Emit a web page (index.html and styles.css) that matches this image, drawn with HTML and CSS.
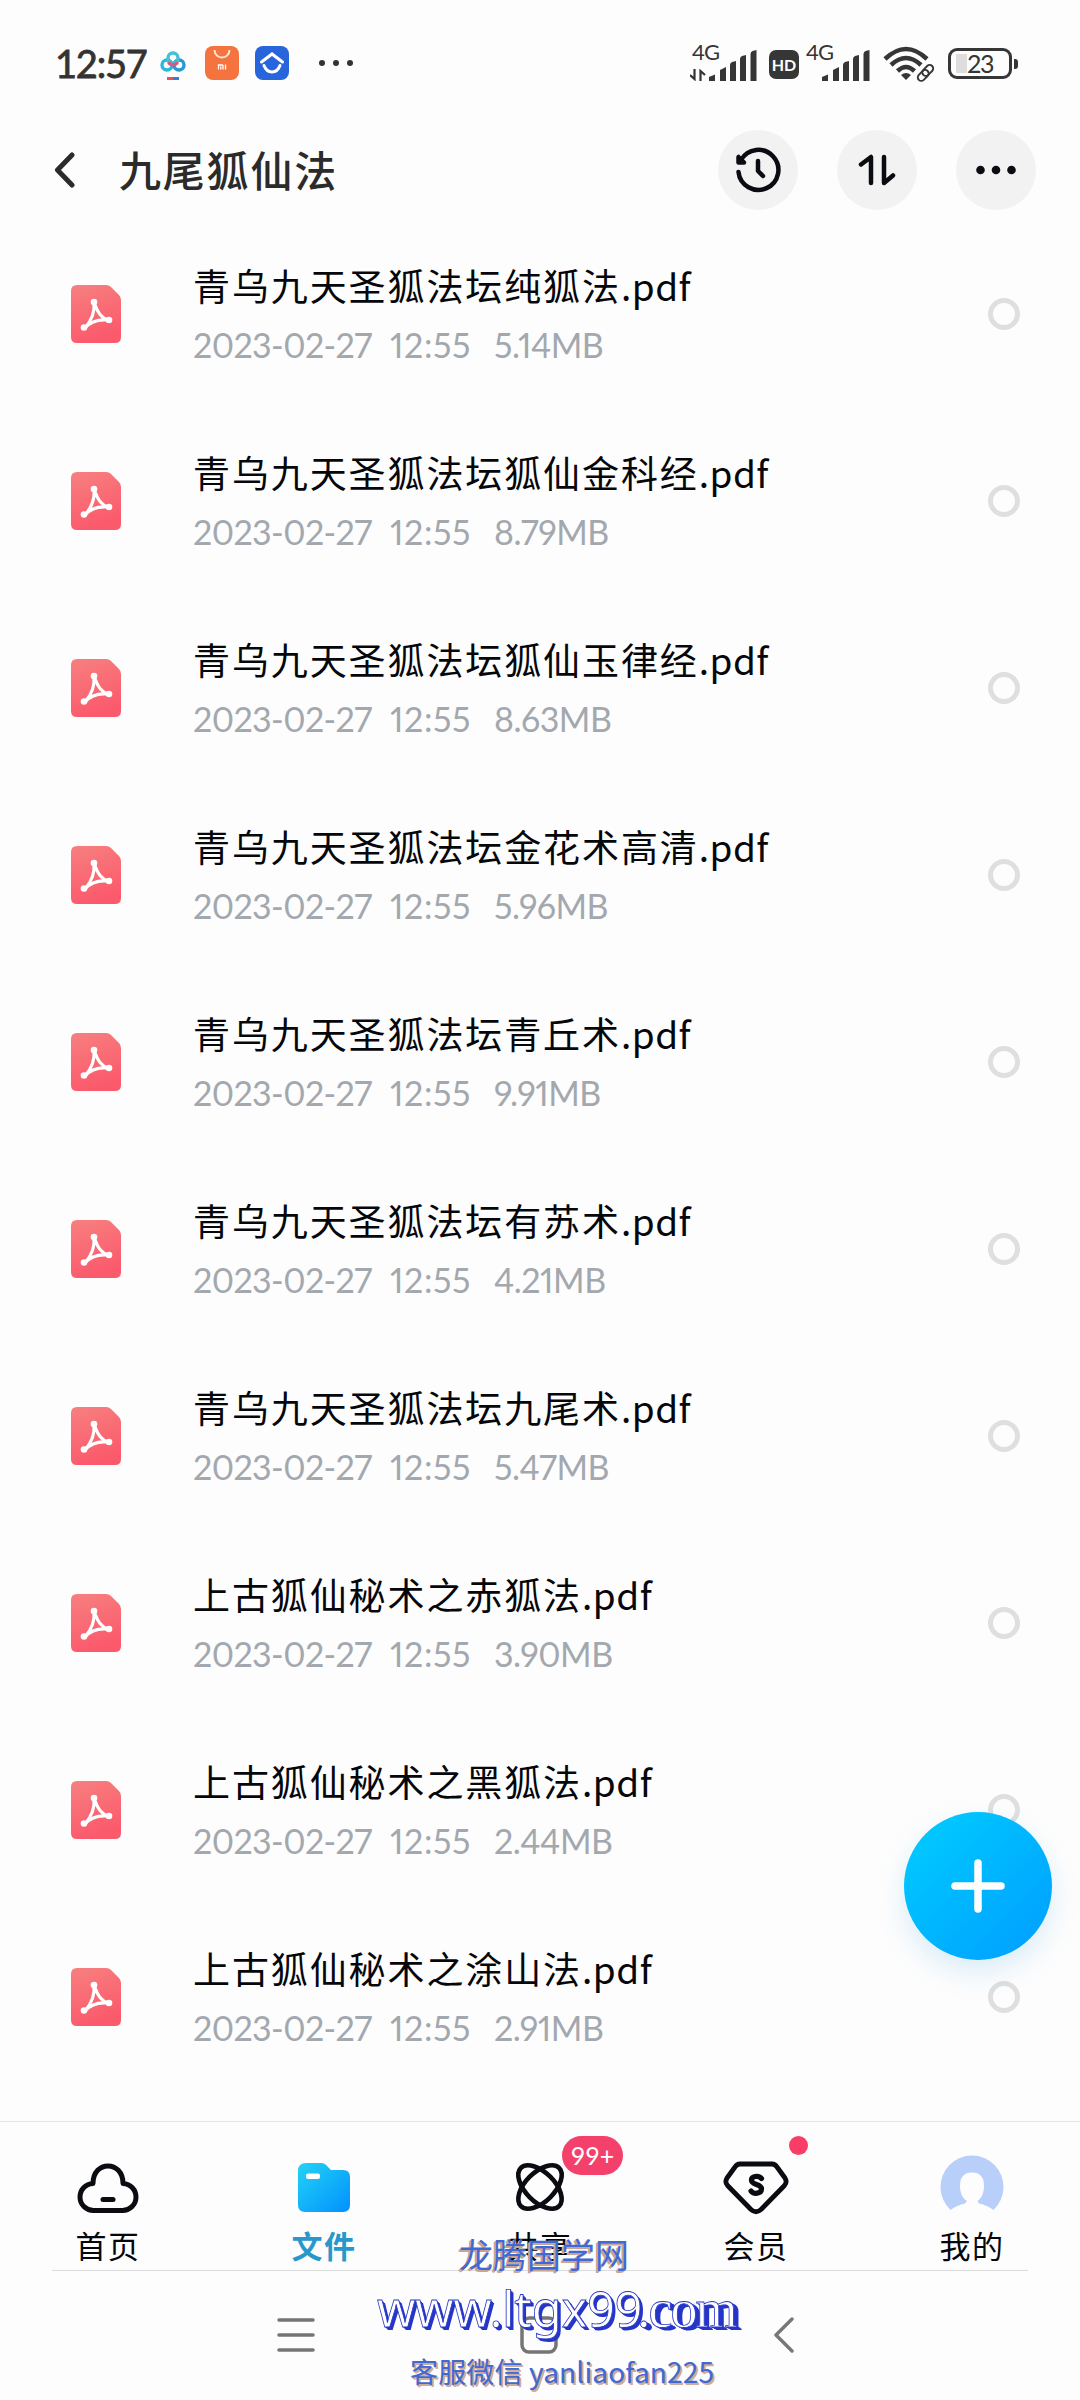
FILE: index.html
```html
<!DOCTYPE html>
<html lang="zh-CN">
<head>
<meta charset="utf-8">
<title>九尾狐仙法</title>
<link rel="stylesheet" href="styles.css">
</head>
<body>
<svg class="defs" width="0" height="0">
  <defs>
    <linearGradient id="pdf-g" x1="0" y1="0" x2="0.3" y2="1"><stop offset="0" stop-color="#f7807f"/><stop offset="1" stop-color="#fb5a6c"/></linearGradient>
    <linearGradient id="folder-g" x1="0" y1="0" x2="1" y2="1"><stop offset="0" stop-color="#23d3f4"/><stop offset="1" stop-color="#0290ff"/></linearGradient>
    <symbol id="pdf" viewBox="0 0 50 58">
      <path fill="url(#pdf-g)" d="M6 0H35Q38 0 40 2L48 10Q50 12 50 15V52Q50 58 44 58H6Q0 58 0 52V6Q0 0 6 0Z"/>
      <path fill="none" stroke="#fff" stroke-width="3.2" stroke-linejoin="round" d="M23 17C27 29 31 33 37 35C27 34 19 37 14 43C21 35 24 27 23 17Z"/>
      <g fill="#fff"><circle cx="23" cy="17" r="3.3"/><circle cx="38" cy="35" r="3.3"/><circle cx="13" cy="42.500" r="3.3"/></g>
    </symbol>
    <symbol id="signal" viewBox="0 0 48 31">
      <g fill="#363636"><path d="M0 31V27L6 24.500V31Z"/><path d="M11 31V20L17 17V31Z"/><path d="M21 31V15Q21 13 23 12L27 11V31Z"/><path d="M31 31V9Q31 7 33 6L37 5V31Z"/><path d="M41.500 31V4Q41.500 2 43.500 1L47.500 0V31Z"/></g>
    </symbol>
  </defs>
</svg>
<div class="screen">
  <header class="status">
    <div class="status-left">
      <span class="clock">12:57</span>
      <svg class="ic-cloud" width="26" height="30" viewBox="0 0 26 30" fill="none" stroke-width="3.4"><circle cx="7" cy="14" r="5" stroke="#2cb8dc"/><circle cx="19" cy="14" r="5" stroke="#2799d4"/><circle cx="13" cy="7" r="5" stroke="#45c0d6"/><path d="M8.500 11A5 5 0 0 0 17.500 11" stroke="#d95a7e"/><path d="M7 27.500H13" stroke="#e0545e" stroke-width="3"/><path d="M13 27.500H19" stroke="#3d77d8" stroke-width="3"/></svg>
      <svg class="ic-mi" width="34" height="34" viewBox="0 0 34 34"><rect width="34" height="34" rx="8" fill="#f4733f"/><path d="M9.500 4C10 14 24 14 24.500 4" fill="none" stroke="#ffe8d8" stroke-width="2"/><path d="M13.500 23.500V19H17.500Q18 19 18 20V23.500M15.800 20.500V23.500M20.500 18.500V23.500" fill="none" stroke="#fff" stroke-width="1.300"/></svg>
      <svg class="ic-home" width="34" height="34" viewBox="0 0 34 34"><rect width="34" height="34" rx="8" fill="#2864dc"/><path d="M6.500 16L17 8L27.500 16M9 19.500C12 28 22 28 25 19.500" fill="none" stroke="#fff" stroke-width="3" stroke-linecap="round"/></svg>
      <svg class="ic-more" width="36" height="8" viewBox="0 0 36 8" fill="#333"><circle cx="4" cy="4" r="3"/><circle cx="18" cy="4" r="3"/><circle cx="32" cy="4" r="3"/></svg>
    </div>
    <div class="status-right">
      <div class="net"><div class="net-tag"><span>4G</span><svg width="16" height="12" viewBox="0 0 16 12" fill="none" stroke="#333" stroke-width="2.200"><path d="M0 6L4.500 10V0M10.500 12V2L15 6"/></svg></div><svg class="bars" width="48" height="31"><use href="#signal"/></svg></div>
      <div class="hd">HD</div>
      <div class="net net2"><div class="net-tag"><span>4G</span></div><svg class="bars" width="48" height="31"><use href="#signal"/></svg></div>
      <svg class="wifi" width="52" height="36" viewBox="0 0 52 36" fill="none" stroke="#363636"><path d="M2 13Q23-7 44 13" stroke-width="4.500"/><path d="M8 19Q23 5 38 19" stroke-width="4.500"/><path d="M14.500 25Q23 17 31.500 25" stroke-width="4.500"/><path d="M18 29Q23 25 28 29L23 34Z" fill="#363636" stroke="none"/><g stroke="#fdfdfd" stroke-width="5"><rect x="40" y="20" width="10" height="8" rx="4" transform="rotate(-45 45 24)"/></g><g stroke-width="1.900"><rect x="38.500" y="21" width="12.500" height="7" rx="3.500" transform="rotate(-45 44.700 24.500)"/><rect x="34" y="26" width="12.500" height="7" rx="3.500" transform="rotate(-45 40.200 29.500)"/></g></svg>
      <div class="battery"><span>23</span></div>
    </div>
  </header>
  <nav class="toolbar">
    <svg class="back" width="22" height="38" viewBox="0 0 22 38" fill="none" stroke="#2b2b2b" stroke-width="5" stroke-linecap="round" stroke-linejoin="round"><path d="M19 4L4.500 19L19 34"/></svg>
    <h1>九尾狐仙法</h1>
    <div class="tools">
      <button class="tool"><svg width="46" height="46" viewBox="0 0 46 46" fill="none" stroke="#0a0c12" stroke-width="4.500" stroke-linecap="round" stroke-linejoin="round"><path d="M3.500 25A20 20 0 1 0 6 13"/><path d="M3.500 10V15.500H9Z"/><path d="M23 14V24L28 29"/></svg></button>
      <button class="tool"><svg width="38" height="32" viewBox="0 0 38 32" fill="none" stroke="#0a0c12" stroke-width="4.500" stroke-linecap="round" stroke-linejoin="round"><path d="M3 10.500L13 3V29M26 3V29L35 21.500"/></svg></button>
      <button class="tool"><svg width="40" height="10" viewBox="0 0 40 10" fill="#0a0c12"><circle cx="4.500" cy="5" r="4.300"/><circle cx="20" cy="5" r="4.300"/><circle cx="35.500" cy="5" r="4.300"/></svg></button>
    </div>
  </nav>
  <main class="files">
    <article class="file"><svg class="pdf" width="50" height="58"><use href="#pdf"/></svg><div class="info"><div class="name">青乌九天圣狐法坛纯狐法<span>.pdf</span></div><div class="meta"><span>2023-02-27</span><span>12:55</span><span>5.14MB</span></div></div><i class="radio"></i></article>
    <article class="file"><svg class="pdf" width="50" height="58"><use href="#pdf"/></svg><div class="info"><div class="name">青乌九天圣狐法坛狐仙金科经<span>.pdf</span></div><div class="meta"><span>2023-02-27</span><span>12:55</span><span>8.79MB</span></div></div><i class="radio"></i></article>
    <article class="file"><svg class="pdf" width="50" height="58"><use href="#pdf"/></svg><div class="info"><div class="name">青乌九天圣狐法坛狐仙玉律经<span>.pdf</span></div><div class="meta"><span>2023-02-27</span><span>12:55</span><span>8.63MB</span></div></div><i class="radio"></i></article>
    <article class="file"><svg class="pdf" width="50" height="58"><use href="#pdf"/></svg><div class="info"><div class="name">青乌九天圣狐法坛金花术高清<span>.pdf</span></div><div class="meta"><span>2023-02-27</span><span>12:55</span><span>5.96MB</span></div></div><i class="radio"></i></article>
    <article class="file"><svg class="pdf" width="50" height="58"><use href="#pdf"/></svg><div class="info"><div class="name">青乌九天圣狐法坛青丘术<span>.pdf</span></div><div class="meta"><span>2023-02-27</span><span>12:55</span><span>9.91MB</span></div></div><i class="radio"></i></article>
    <article class="file"><svg class="pdf" width="50" height="58"><use href="#pdf"/></svg><div class="info"><div class="name">青乌九天圣狐法坛有苏术<span>.pdf</span></div><div class="meta"><span>2023-02-27</span><span>12:55</span><span>4.21MB</span></div></div><i class="radio"></i></article>
    <article class="file"><svg class="pdf" width="50" height="58"><use href="#pdf"/></svg><div class="info"><div class="name">青乌九天圣狐法坛九尾术<span>.pdf</span></div><div class="meta"><span>2023-02-27</span><span>12:55</span><span>5.47MB</span></div></div><i class="radio"></i></article>
    <article class="file"><svg class="pdf" width="50" height="58"><use href="#pdf"/></svg><div class="info"><div class="name">上古狐仙秘术之赤狐法<span>.pdf</span></div><div class="meta"><span>2023-02-27</span><span>12:55</span><span>3.90MB</span></div></div><i class="radio"></i></article>
    <article class="file"><svg class="pdf" width="50" height="58"><use href="#pdf"/></svg><div class="info"><div class="name">上古狐仙秘术之黑狐法<span>.pdf</span></div><div class="meta"><span>2023-02-27</span><span>12:55</span><span>2.44MB</span></div></div><i class="radio"></i></article>
    <article class="file"><svg class="pdf" width="50" height="58"><use href="#pdf"/></svg><div class="info"><div class="name">上古狐仙秘术之涂山法<span>.pdf</span></div><div class="meta"><span>2023-02-27</span><span>12:55</span><span>2.91MB</span></div></div><i class="radio"></i></article>
  </main>
  <nav class="tabs">
    <div class="tab"><svg width="64" height="64" viewBox="0 0 64 64" fill="none" stroke="#0a0c12" stroke-width="5" stroke-linecap="round" stroke-linejoin="round"><path d="M18 57.500A13.500 13.500 0 0 1 17 30.500C17 7 47 7 47 30.500A13.500 13.500 0 0 1 46 57.500Z"/><path d="M27 46.500H37"/></svg><span>首页</span></div>
    <div class="tab active"><svg width="64" height="64" viewBox="0 0 64 64"><path fill="url(#folder-g)" d="M14 10H29Q33 10 36 14L39 17H51Q58 17 58 24V52Q58 59 51 59H13Q6 59 6 52V18Q6 10 14 10Z"/><rect x="14" y="20.500" width="14" height="5.500" rx="2" fill="#fff"/></svg><span>文件</span></div>
    <div class="tab"><svg width="64" height="64" viewBox="0 0 64 64" fill="none" stroke="#0a0c12" stroke-width="4.600"><ellipse cx="32" cy="34" rx="27" ry="14.500" transform="rotate(45 32 34)"/><ellipse cx="32" cy="34" rx="27" ry="14.500" transform="rotate(-45 32 34)"/></svg><span>共享</span><b class="badge">99+</b></div>
    <div class="tab"><svg width="68" height="64" viewBox="0 0 68 64" fill="none" stroke="#0a0c12" stroke-width="4.800" stroke-linecap="round" stroke-linejoin="round"><path d="M18 11H50Q53 11 55 14L63 25Q65.500 29 62.500 32.500L39 56.500Q34 61 29 56.500L5.500 32.500Q2.500 29 5 25L13 14Q15 11 18 11Z"/><path stroke-width="5.200" d="M39.500 25.500C36.500 22 29 23 29.500 27.500C30 32.500 39.500 30.500 39.500 36C39.500 41 31.500 41.500 29 38"/></svg><span>会员</span><b class="dot"></b></div>
    <div class="tab"><svg width="64" height="64" viewBox="0 0 64 64"><path fill="#b8cffa" d="M10.500 57A31.500 31.500 0 1 1 53.500 57Q47 52 39 50.500L37.500 48C42 45 44 39 44 33C44 24 40 19.500 32 19.500C24 19.500 20 24 20 33C20 39 22 45 27 48L25 50.500Q17 52 10.500 57Z"/></svg><span>我的</span></div>
  </nav>
  <footer class="system">
    <svg width="40" height="36" viewBox="0 0 40 36" stroke="#757575" stroke-width="3.500" stroke-linecap="round"><path d="M3 3H37M3 18H37M3 33H37"/></svg>
    <svg width="38" height="38" viewBox="0 0 38 38" fill="none" stroke="#757575" stroke-width="3.500"><rect x="2" y="2" width="34" height="34" rx="7"/></svg>
    <svg width="22" height="36" viewBox="0 0 22 36" fill="none" stroke="#777" stroke-width="3.400" stroke-linecap="round" stroke-linejoin="round"><path d="M19 2L3 18L19 34"/></svg>
  </footer>
  <div class="fab"><svg width="54" height="54" viewBox="0 0 54 54" stroke="#fff" stroke-width="7.500" stroke-linecap="round"><path d="M27 4V50M4 27H50"/></svg></div>
  <div class="mark mark-name">龙腾国学网</div>
  <div class="mark mark-url"><span class="url-sans">www.ltgx99</span><span class="url-serif">.com</span></div>
  <div class="mark mark-wx">客服微信 yanliaofan225</div>
</div>
</body>
</html>
```
FILE: styles.css
```css
* { box-sizing: border-box; }
body { margin: 0; background: #fdfdfd; font-family: "Noto Sans CJK SC", sans-serif; color: #05070b; }
svg { display: block; flex: none; }
.defs { position: absolute; }
.screen { position: relative; width: 1080px; height: 2400px; overflow: hidden; display: flex; flex-direction: column; }

.status { height: 126px; padding: 0 68px 0 55px; display: flex; justify-content: space-between; align-items: center; }
.status-left, .status-right { display: flex; align-items: center; }
.clock { width: 105px; font: 400 38px/1 Lato, sans-serif; color: #333; letter-spacing: -1.2px; white-space: nowrap; -webkit-text-stroke: 0.8px #333; }
.ic-mi { margin-left: 19px; }
.ic-home { margin-left: 16px; }
.ic-more { margin-left: 29px; }
.ic-cloud { margin-top: 5px; }
.net { display: flex; height: 36px; align-items: flex-end; }
.net-tag { width: 19px; height: 36px; display: flex; flex-direction: column; justify-content: space-between; font: 22px/18px Lato, sans-serif; color: #363636; }
.net-tag span { padding-left: 2px; margin-top: -2px; letter-spacing: -0.8px; }
.net2 .net-tag span { padding: 0; }
.net2 .net-tag { width: 16px; }
.hd { width: 30px; height: 29px; margin: 2px 7px 0 12px; border-radius: 7px; background: #363636; color: #fff; font: bold 16px/29px Lato, sans-serif; text-align: center; }
.wifi { margin: 2px 13px 0 13px; }
.battery { position: relative; width: 64px; height: 31px; border: 3px solid #363636; border-radius: 9px; text-align: center; font: 25px/25px Lato, sans-serif; letter-spacing: -1.5px; color: #363636; background: linear-gradient(#ddd, #ddd) 5px 3px / 11px 19px no-repeat; }
.battery::after { content: ""; position: absolute; right: -9px; top: 8px; width: 4px; height: 10px; border-radius: 0 3px 3px 0; background: #363636; }

.toolbar { height: 88px; padding: 0 44px 0 53px; display: flex; align-items: center; }
.toolbar h1 { margin: -3px 0 0 44px; font-size: 42px; font-weight: 500; letter-spacing: 1.8px; line-height: 60px; color: #2b2b2b; }
.tools { margin-left: auto; display: flex; gap: 39px; }
.tool { width: 80px; height: 80px; border: 0; padding: 0; border-radius: 50%; background: #f2f2f2; display: grid; place-items: center; }

.files { padding-top: 6px; height: 1907px; overflow: hidden; }
.file { height: 187px; padding: 0 60px 0 71px; display: flex; align-items: center; }
.info { margin-left: 72px; flex: 1; }
.name { font-size: 37px; line-height: 54px; letter-spacing: 1.9px; white-space: nowrap; }
.name span { letter-spacing: 0.5px; }
.meta { display: flex; font: 34px/50px Lato, sans-serif; font-variant-numeric: proportional-nums; color: #a3a8af; margin-top: 8px; white-space: nowrap; }
.meta span:nth-child(1) { width: 197px; letter-spacing: -0.6px; }
.meta span:nth-child(2) { width: 104px; letter-spacing: 0.6px; }
.meta span:nth-child(3) { letter-spacing: -0.5px; }
.radio { width: 32px; height: 32px; border: 5px solid #dfdfe0; border-radius: 50%; }

.tabs { height: 149px; border-top: 1px solid #e4e4e4; display: grid; grid-template-columns: repeat(5, 1fr); }
.tab { position: relative; display: flex; flex-direction: column; align-items: center; padding-top: 31px; }
.tab span { font-size: 31px; line-height: 44px; margin-top: 6px; letter-spacing: 1.5px; }
.tab.active span { color: #2897c9; font-weight: 700; }
.badge { position: absolute; left: 130px; top: 14px; width: 61px; height: 39px; border-radius: 20px; background: #f4416b; color: #fff; font: 25px/38px Lato, sans-serif; text-align: center; }
.dot { position: absolute; left: 141px; top: 14px; width: 19px; height: 19px; border-radius: 50%; background: #f93d66; }

.system { position: relative; flex: 1; display: flex; align-items: center; gap: 215px; padding-left: 276px; }
.system::before { content: ""; position: absolute; left: 52px; right: 52px; top: 0; height: 1px; background: #dcdcdc; }
.system svg:nth-child(2) { margin-left: -11px; }

.fab { position: absolute; left: 904px; top: 1812px; width: 148px; height: 148px; border-radius: 50%; display: grid; place-items: center; background: linear-gradient(135deg, #00ceff, #009dff); box-shadow: 0 12px 28px rgba(40, 150, 220, 0.16); }
.mark { position: absolute; white-space: nowrap; }
.mark-name { left: 459px; top: 2229px; font-size: 34px; line-height: 50px; color: #4169d6; text-shadow: -1px 1px 0 #c9a58f, -2px 2px 0 #c9a58f; }
.mark-url { left: 377px; top: 2273px; display: flex; align-items: baseline; line-height: 70px; color: #fff; -webkit-text-stroke: 0.8px #2636c8; }
.url-sans { width: 260px; font-family: "Noto Sans"; font-size: 49px; letter-spacing: -0.4px; text-shadow: 1px 1px 0 #2636c8, 2px 2px 0 #2636c8, 3px 3px 0 #2636c8; }
.url-serif { font-family: "Liberation Serif"; font-size: 54px; letter-spacing: -2px; text-shadow: 1px 1px 0 #2636c8, 2px 1px 0 #2636c8, 3px 2px 0 #2636c8, 4px 2px 0 #2636c8, 5px 3px 0 #2636c8; }
.mark-wx { left: 410px; top: 2350px; font-size: 28px; line-height: 42px; letter-spacing: 0.15px; color: #4169d6; text-shadow: 1px 1px 0 #d0ab96, 2px 2px 0 #d0ab96; }
```
